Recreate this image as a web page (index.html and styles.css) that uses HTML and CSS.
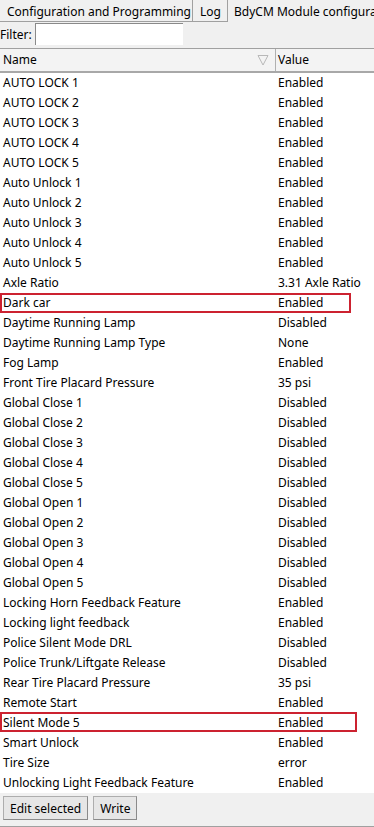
FILE: index.html
```html
<!DOCTYPE html>
<html>
<head>
<meta charset="utf-8">
<link rel="stylesheet" href="styles.css">
</head>
<body>
<div class="app">
  <div class="tabs">
    <div class="tab tab-inactive tab-first">Configuration and Programming</div>
    <div class="tab tab-inactive tab-log">Log</div>
    <div class="tab tab-active">BdyCM Module configuration</div>
  </div>
  <div class="filter">
    <span class="filter-label">Filter:</span>
    <div class="filter-input"></div>
  </div>
  <div class="table">
    <div class="thead">
      <div class="th th-name">Name<span class="sort"><svg width="12" height="12" viewBox="0 0 12 12"><path d="M1 1.5 L11 1.5 L6 11 Z" fill="none" stroke="#b8b8b8" stroke-width="1"/></svg></span></div>
      <div class="th th-value">Value</div>
    </div>
    <div class="tbody" id="tbody"></div>
  </div>
  <div class="buttons">
    <button class="btn">Edit selected</button>
    <button class="btn">Write</button>
  </div>
</div>
<script>
const rows = [
["AUTO LOCK 1","Enabled"],["AUTO LOCK 2","Enabled"],["AUTO LOCK 3","Enabled"],["AUTO LOCK 4","Enabled"],["AUTO LOCK 5","Enabled"],
["Auto Unlock 1","Enabled"],["Auto Unlock 2","Enabled"],["Auto Unlock 3","Enabled"],["Auto Unlock 4","Enabled"],["Auto Unlock 5","Enabled"],
["Axle Ratio","3.31 Axle Ratio"],["Dark car","Enabled","hl1"],["Daytime Running Lamp","Disabled"],["Daytime Running Lamp Type","None"],
["Fog Lamp","Enabled"],["Front Tire Placard Pressure","35 psi"],
["Global Close 1","Disabled"],["Global Close 2","Disabled"],["Global Close 3","Disabled"],["Global Close 4","Disabled"],["Global Close 5","Disabled"],
["Global Open 1","Disabled"],["Global Open 2","Disabled"],["Global Open 3","Disabled"],["Global Open 4","Disabled"],["Global Open 5","Disabled"],
["Locking Horn Feedback Feature","Enabled"],["Locking light feedback","Enabled"],["Police Silent Mode DRL","Disabled"],
["Police Trunk/Liftgate Release","Disabled"],["Rear Tire Placard Pressure","35 psi"],["Remote Start","Enabled"],
["Silent Mode 5","Enabled","hl2"],["Smart Unlock","Enabled"],["Tire Size","error"],["Unlocking Light Feedback Feature","Enabled"]
];
const tb = document.getElementById('tbody');
for (const r of rows) {
  const d = document.createElement('div');
  d.className = 'tr' + (r[2] ? ' ' + r[2] : '');
  d.innerHTML = '<div class="td td-name"></div><div class="td td-value"></div>';
  d.children[0].textContent = r[0];
  d.children[1].textContent = r[1];
  tb.appendChild(d);
}
</script>
</body>
</html>
```
FILE: styles.css
```css
*, *::before, *::after { box-sizing: border-box; }
html, body { margin: 0; padding: 0; }
body {
  font-family: "Noto Sans", "DejaVu Sans", sans-serif;
  font-size: 12px;
  color: #000;
  background: #f0f0f0;
  width: 374px;
  height: 827px;
  overflow: hidden;
}
.app { display: flex; flex-direction: column; height: 827px; }
.tabs {
  display: flex;
  height: 22px;
  white-space: nowrap;
  overflow: hidden;
  flex: none;
}
.tab {
  height: 22px;
  padding: 2px 0 0 7px;
  line-height: 20px;
  flex: none;
}
.tab-inactive {
  border-bottom: 1px solid #a0a0a0;
  border-right: 1px solid #a0a0a0;
  background: #f0f0f0;
  line-height: 19px;
}
.tab-first { width: 193px; }
.tab-log { width: 35px; padding-left: 7px; }
.tab-active { padding-left: 6px; }
.filter {
  display: flex;
  align-items: center;
  height: 24px;
  flex: none;
}
.filter-label { width: 35px; padding-left: 0; }
.filter-input {
  width: 148px;
  height: 22px;
  background: #fff;
  border-left: 1px solid #8a8a8a;
  border-top: 1px solid #8a8a8a;
}
.table {
  margin-top: 2px;
  border-top: 1px solid #a0a0a0;
  flex: none;
}
.thead {
  display: flex;
  height: 24px;
  background: #f3f3f3;
  border-bottom: 2px solid #a8a8a8;
}
.th {
  line-height: 22px;
  position: relative;
}
.th-name {
  width: 276px;
  padding-left: 3px;
  border-right: 1px solid #b0b0b0;
}
.th-value { padding-left: 2px; flex: 1; }
.sort { position: absolute; left: 257px; top: 5px; line-height: 0; }
.tbody { background: #fff; }
.tr {
  display: flex;
  height: 20px;
  line-height: 20px;
  position: relative;
}
.td { white-space: nowrap; overflow: hidden; }
.td-name { width: 276px; padding-left: 3px; }
.td-value { padding-left: 2px; flex: 1; }
.hl1::after, .hl2::after {
  content: "";
  position: absolute;
  left: 0;
  top: 0;
  height: 20px;
  border: 2px solid #cc2230;
}
.hl1::after { width: 351px; }
.hl2::after { width: 357px; top: -1px; }
.buttons {
  display: flex;
  gap: 5px;
  padding: 3px 0 0 3px;
  flex: 1;
  border-bottom: 1px solid #a0a0a0;
}
.btn {
  font-family: inherit;
  font-size: 12px;
  height: 24px;
  padding: 0 6px;
  background: #e6e6e6;
  border: 1px solid #adadad;
  border-right-color: #8a8a8a;
  border-bottom-color: #8a8a8a;
  color: #000;
}
```
